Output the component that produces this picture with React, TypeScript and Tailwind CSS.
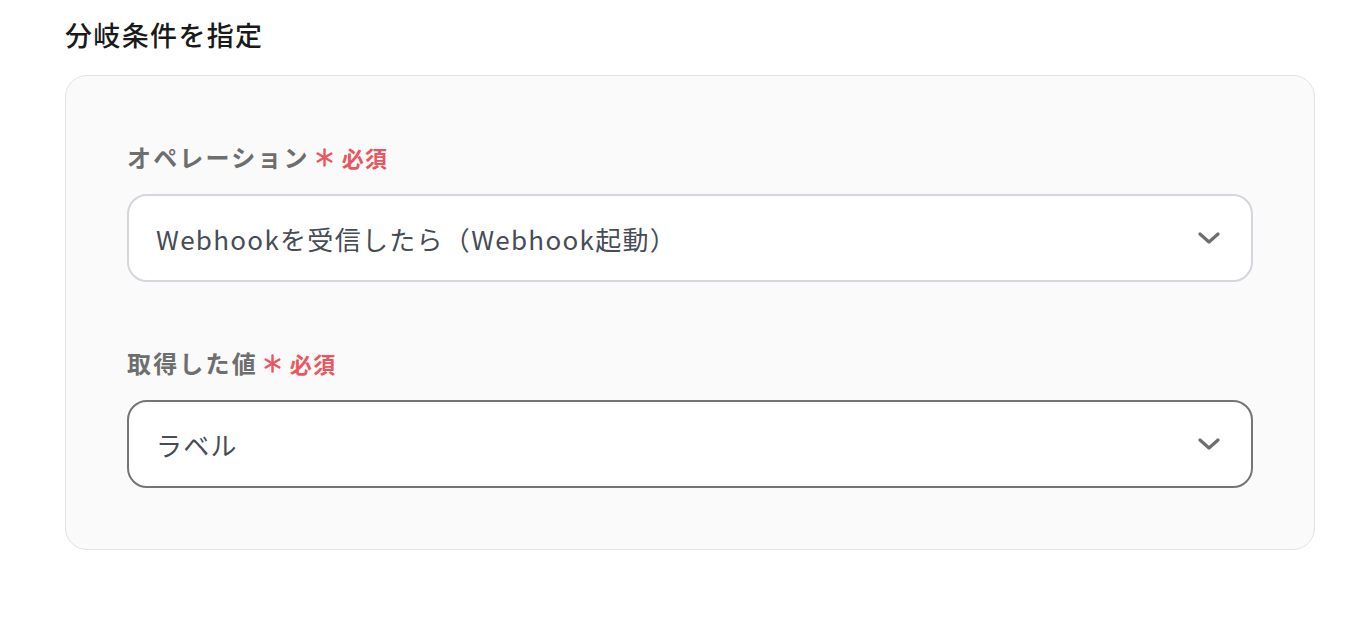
const font = { fontFamily: '"Noto Sans CJK JP", "Noto Sans", sans-serif' }

function Asterisk() {
    return (
        <svg width="19" height="19" viewBox="0 0 18 18" className="text-[#ea5560]" fill="none" stroke="currentColor" strokeWidth="2.3" strokeLinecap="round">
            <line x1="9" y1="1.5" x2="9" y2="16.5" />
            <line x1="2.5" y1="5.25" x2="15.5" y2="12.75" />
            <line x1="2.5" y1="12.75" x2="15.5" y2="5.25" />
        </svg>
    )
}

function Chevron() {
    return (
        <svg width="22" height="14" viewBox="0 0 22 14" fill="none" stroke="#6e6e6e" strokeWidth="3.2" strokeLinecap="round" strokeLinejoin="round">
            <polyline points="2,3 11,11 20,3" />
        </svg>
    )
}

type FieldProps = {
    label: string
    value: string
    focused?: boolean
}

function Field({ label, value, focused }: FieldProps) {
    return (
        <div>
            <div className="flex items-center h-10 mb-[17px]">
                <span className="text-[24px] font-bold text-[#6e6e6e] tracking-[0.09em]">{label}</span>
                <span className="ml-[5px] flex items-center">
                    <Asterisk />
                </span>
                <span className="ml-[8px] text-[22px] font-bold text-[#ea5560] tracking-[0.06em]">必須</span>
            </div>
            <div
                className={
                    focused
                        ? 'h-[88px] rounded-[20px] bg-white border-2 border-[#757575] flex items-center pl-[27px] pr-[31px]'
                        : 'h-[88px] rounded-[20px] bg-white border-2 border-[#d4d6dc] flex items-center pl-[27px] pr-[31px]'
                }
            >
                <span className="flex-1 text-[26px] text-[#474c55] tracking-[0.05em]">{value}</span>
                <Chevron />
            </div>
        </div>
    )
}

export default function App() {
    return (
        <div className="min-h-screen bg-white pt-[17px] pl-[65px] pr-[51px]" style={font}>
            <h2 className="text-[27px] leading-9 font-medium text-[#1a1a1a] tracking-[0.05em] mb-[22px]">
                分岐条件を指定
            </h2>
            <div className="rounded-[22px] border border-[#e3e3e3] bg-[#fafafa] p-[61px] flex flex-col gap-[61px]">
                <Field label="オペレーション" value="Webhookを受信したら（Webhook起動）" />
                <Field label="取得した値" value="ラベル" focused />
            </div>
        </div>
    )
}
